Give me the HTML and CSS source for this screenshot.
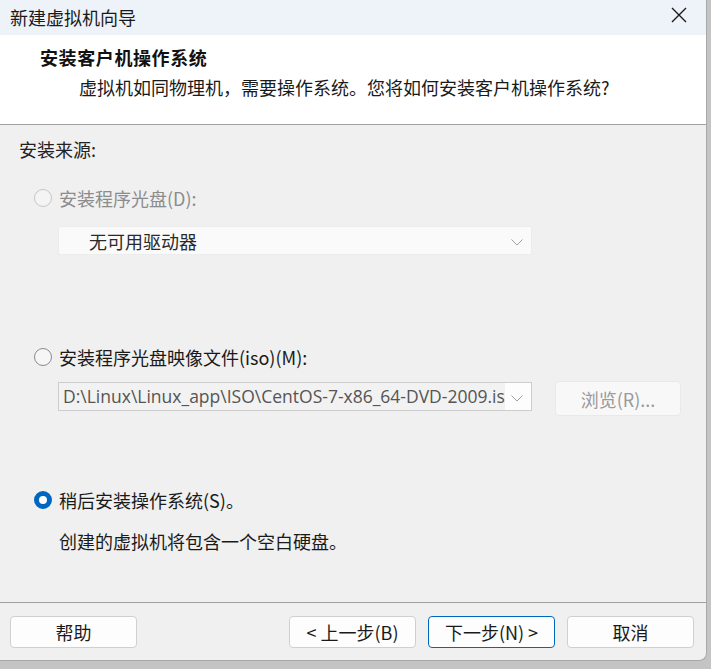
FILE: index.html
```html
<!DOCTYPE html>
<html lang="zh-CN">
<head>
<meta charset="utf-8">
<title>新建虚拟机向导</title>
<link rel="stylesheet" href="styles.css">
</head>
<body>
<div class="window">
  <div class="titlebar">
    <span class="title">新建虚拟机向导</span>
    <svg class="close" width="16" height="16" viewBox="0 0 16 16"><path d="M1 1 L15 15 M15 1 L1 15" stroke="#1a1a1a" stroke-width="1.4" fill="none"/></svg>
  </div>
  <div class="header">
    <div class="h-title">安装客户机操作系统</div>
    <div class="h-sub">虚拟机如同物理机，需要操作系统。您将如何安装客户机操作系统?</div>
  </div>
  <div class="content">
    <div class="source-label">安装来源:</div>

    <div class="radio-row row-1 disabled">
      <span class="radio"></span>
      <span class="label">安装程序光盘(D):</span>
    </div>
    <div class="select select-disabled">
      <span class="select-text">无可用驱动器</span>
      <svg class="chev" width="12" height="7" viewBox="0 0 12 7"><path d="M0.5 0.5 L6 6 L11.5 0.5" stroke="#a0a0a0" stroke-width="1" fill="none"/></svg>
    </div>

    <div class="radio-row row-2">
      <span class="radio"></span>
      <span class="label">安装程序光盘映像文件(iso)(M):</span>
    </div>
    <div class="iso-row">
      <div class="select select-iso">
        <span class="path-text">D:\Linux\Linux_app\ISO\CentOS-7-x86_64-DVD-2009.iso</span>
        <svg class="chev" width="12" height="7" viewBox="0 0 12 7"><path d="M0.5 0.5 L6 6 L11.5 0.5" stroke="#a0a0a0" stroke-width="1" fill="none"/></svg>
      </div>
      <div class="browse">浏览(R)...</div>
    </div>

    <div class="radio-row row-3">
      <span class="radio checked"></span>
      <span class="label">稍后安装操作系统(S)。</span>
    </div>
    <div class="desc">创建的虚拟机将包含一个空白硬盘。</div>
  </div>
  <div class="footer">
    <div class="btn btn-help">帮助</div>
    <div class="spacer"></div>
    <div class="btn">&lt; 上一步(B)</div>
    <div class="btn btn-primary">下一步(N) &gt;</div>
    <div class="btn">取消</div>
  </div>
</div>
</body>
</html>
```
FILE: styles.css
```css
html, body {
  margin: 0;
  padding: 0;
  background: #c4c4c4;
  height: 100%;
}
body {
  font-family: "Noto Sans CJK SC", "Noto Sans", sans-serif;
  color: #1a1a1a;
}
.window {
  width: 707px;
  height: 661px;
  background: #f0f0f0;
  border-right: 1px solid #a8a8a8;
  border-bottom: 1px solid #a8a8a8;
  border-radius: 0 0 8px 0;
  display: flex;
  flex-direction: column;
  overflow: hidden;
  box-sizing: border-box;
}
.titlebar {
  height: 35px;
  flex: none;
  background: #eef2f9;
  display: flex;
  align-items: center;
  justify-content: space-between;
  padding: 0 19px 2px 10px;
  box-sizing: border-box;
}
.title {
  font-size: 18px;
  line-height: 24px;
  color: #1a1a1a;
}
.close {
  display: block;
  margin-top: -4px;
}
.header {
  flex: none;
  height: 90px;
  background: #ffffff;
  border-bottom: 1px solid #a0a0a0;
  box-sizing: border-box;
  padding-top: 10px;
}
.h-title {
  font-size: 18px;
  line-height: 24px;
  font-weight: bold;
  letter-spacing: 0.6px;
  padding-left: 40px;
  color: #111;
}
.h-sub {
  font-size: 18px;
  line-height: 24px;
  margin-top: 6px;
  padding-left: 79px;
  color: #1a1a1a;
}
.content {
  flex: 1;
  padding-top: 12px;
  font-size: 18px;
}
.source-label {
  line-height: 24px;
  padding-left: 19px;
  color: #222;
}
.radio-row {
  display: flex;
  align-items: center;
  height: 24px;
  padding-left: 34px;
}
.row-1 { margin-top: 25px; }
.row-2 { margin-top: 90px; }
.row-3 { margin-top: 72px; }
.radio {
  width: 18px;
  height: 18px;
  border-radius: 50%;
  box-sizing: border-box;
  border: 1px solid #8a8a8a;
  background: #f6f6f6;
  margin-right: 7px;
  flex: none;
}
.disabled .radio {
  border-color: #c6c6c6;
  background: #f4f4f4;
}
.disabled .label {
  color: #8c8c8c;
}
.radio.checked {
  border: 5.5px solid #0067c0;
  background: #ffffff;
}
.label {
  line-height: 24px;
  color: #1a1a1a;
}
.select {
  margin-left: 58px;
  width: 474px;
  height: 29px;
  box-sizing: border-box;
  display: flex;
  align-items: center;
  position: relative;
}
.select-disabled {
  margin-top: 16px;
  background: #fafafa;
  border: 1px solid #ececec;
}
.select-text {
  padding-left: 30px;
  color: #2a2a2a;
  font-size: 18px;
}
.chev {
  position: absolute;
  right: 8px;
  top: 12px;
}
.iso-row {
  display: flex;
  align-items: flex-start;
  margin-top: 13px;
}
.select-iso {
  background: #fdfdfd;
  border: 1px solid #cdcdcd;
}
.path-text {
  display: block;
  width: 446px;
  height: 27px;
  line-height: 27px;
  padding-left: 4px;
  box-sizing: border-box;
  overflow: hidden;
  white-space: nowrap;
  background: #f2f2f2;
  color: #555555;
  font-family: "Open Sans", "Noto Sans", sans-serif;
  font-size: 17.5px;
}
.browse {
  margin-left: 23px;
  margin-top: -1px;
  width: 126px;
  height: 35px;
  box-sizing: border-box;
  background: #f8f8f8;
  border: 1px solid #e9e9e9;
  border-radius: 4px;
  color: #9a9a9a;
  font-size: 18px;
  display: flex;
  align-items: center;
  justify-content: center;
}
.desc {
  margin-top: 17px;
  padding-left: 59px;
  line-height: 24px;
  color: #1a1a1a;
}
.footer {
  flex: none;
  height: 58px;
  border-top: 1px solid #a0a0a0;
  box-sizing: border-box;
  display: flex;
  align-items: flex-start;
  padding: 13px 12px 0 10px;
}
.spacer { flex: 1; }
.btn {
  width: 127px;
  height: 32px;
  box-sizing: border-box;
  background: #fdfdfd;
  border: 1px solid #d0d0d0;
  border-radius: 4px;
  font-size: 18px;
  color: #1a1a1a;
  display: flex;
  align-items: center;
  justify-content: center;
  margin-left: 12px;
}
.btn-help {
  margin-left: 0;
  width: 127px;
}
.btn-primary {
  border-color: #0067c0;
}
```
